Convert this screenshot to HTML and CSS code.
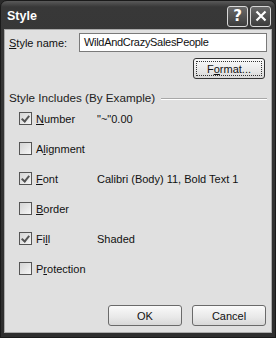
FILE: index.html
```html
<!DOCTYPE html>
<html lang="en">
<head>
  <meta charset="UTF-8">
  <title>Style</title>
  <link rel="stylesheet" href="styles.css">
</head>
<body>
<div class="window">
  <div class="titlebar">
    <span class="title">Style</span>
    <span class="tbtn">?</span>
    <span class="tbtn close">
      <svg width="12" height="12" viewBox="0 0 12 12"><path d="M1.5 1.5L10.5 10.5M10.5 1.5L1.5 10.5" stroke="#fff" stroke-width="2.2"/></svg>
    </span>
  </div>
  <div class="client">
    <div class="name-row">
      <span class="label"><u>S</u>tyle name:</span>
      <div class="textbox">WildAndCrazySalesPeople</div>
    </div>
    <div class="format-row">
      <button class="btn format">F<u>o</u>rmat...</button>
    </div>
    <div class="group-head">
      <span>Style Includes (By Example)</span>
      <span class="rule"></span>
    </div>
    <div class="checks">
      <div class="check-row">
        <span class="box on"></span><span class="cname"><u>N</u>umber</span><span class="cval">"~"0.00</span>
      </div>
      <div class="check-row">
        <span class="box"></span><span class="cname">A<u>l</u>ignment</span><span class="cval"></span>
      </div>
      <div class="check-row">
        <span class="box on"></span><span class="cname"><u>F</u>ont</span><span class="cval">Calibri (Body) 11, Bold Text 1</span>
      </div>
      <div class="check-row">
        <span class="box"></span><span class="cname"><u>B</u>order</span><span class="cval"></span>
      </div>
      <div class="check-row">
        <span class="box on"></span><span class="cname">Fi<u>l</u>l</span><span class="cval">Shaded</span>
      </div>
      <div class="check-row">
        <span class="box"></span><span class="cname">P<u>r</u>otection</span><span class="cval"></span>
      </div>
    </div>
    <div class="actions">
      <button class="btn">OK</button>
      <button class="btn">Cancel</button>
    </div>
  </div>
</div>
</body>
</html>
```

FILE: styles.css
```css
body {
  margin: 0;
  background: #2a2a2a;
  font-family: "Liberation Sans", Arial, sans-serif;
  font-size: 11px;
  color: #111;
}
.window {
  width: 276px;
  height: 338px;
  box-sizing: border-box;
  background: linear-gradient(#5a5a5a, #383838 6px, #2e2e2e);
  border: 1px solid #1a1a1a;
  border-radius: 7px 7px 0 0;
  padding: 0 3px 4px 3px;
  display: flex;
  flex-direction: column;
}
.titlebar {
  height: 28px;
  display: flex;
  align-items: center;
  padding: 0 1px 0 3px;
  gap: 2px;
}
.title {
  flex: 1;
  color: #fff;
  font-weight: bold;
  font-size: 12.5px;
  margin-top: 1px;
}
.tbtn {
  width: 19px;
  height: 19px;
  border: 1px solid #d8d8d8;
  border-radius: 3px;
  background: linear-gradient(#6a6a6a, #3c3c3c);
  color: #fff;
  font-family: "DejaVu Sans", sans-serif;
  font-weight: bold;
  font-size: 15px;
  display: flex;
  align-items: center;
  justify-content: center;
  margin-top: 2px;
}
.client {
  flex: 1;
  background: #e0e0e0;
  border: 1px solid #aaa;
  display: flex;
  flex-direction: column;
  padding: 3px 4px 0 4px;
}
.name-row {
  display: flex;
  align-items: center;
  gap: 8px;
}
.label {
  width: 62px;
}
.textbox {
  flex: 1;
  height: 19px;
  box-sizing: border-box;
  background: #fff;
  border: 1px solid #7a7a7a;
  padding: 0 4px;
  line-height: 17px;
  font-size: 11px;
  letter-spacing: -0.3px;
}
.format-row {
  display: flex;
  justify-content: flex-end;
  padding: 6px 2px 0 0;
}
.btn {
  font-family: "Liberation Sans", Arial, sans-serif;
  font-size: 11px;
  color: #111;
  background: linear-gradient(#fafafa, #e8e8e8 60%, #d8d8d8);
  border: 1px solid #6a6a6a;
  border-radius: 3px;
  padding: 0;
  height: 21px;
  width: 74px;
}
.format {
  width: 72px;
  outline: 1px dotted #333;
  outline-offset: -4px;
  border: 1px solid #333;
}
.group-head {
  display: flex;
  align-items: center;
  gap: 6px;
  margin-top: 12px;
  font-size: 11.7px;
  color: #222;
}
.rule {
  flex: 1;
  height: 0;
  border-top: 1px solid #a8a8a8;
  border-bottom: 1px solid #fff;
  margin-top: 2px;
}
.checks {
  padding: 8px 0 0 10px;
}
.check-row {
  height: 30px;
  display: flex;
  align-items: flex-start;
}
.box {
  width: 13px;
  height: 13px;
  box-sizing: border-box;
  border: 1px solid #555;
  background: linear-gradient(135deg, #d4d4d4, #f6f6f6);
  position: relative;
}
.box.on::after {
  content: "";
  position: absolute;
  left: 3px;
  top: 1px;
  width: 3px;
  height: 6px;
  border: solid #555;
  border-width: 0 2px 2px 0;
  transform: rotate(40deg);
}
.cname {
  width: 61px;
  padding-left: 4px;
  line-height: 14px;
}
.cval {
  line-height: 14px;
}
.actions {
  margin-top: auto;
  display: flex;
  justify-content: flex-end;
  gap: 10px;
  padding: 0 1px 6px 0;
}
```
